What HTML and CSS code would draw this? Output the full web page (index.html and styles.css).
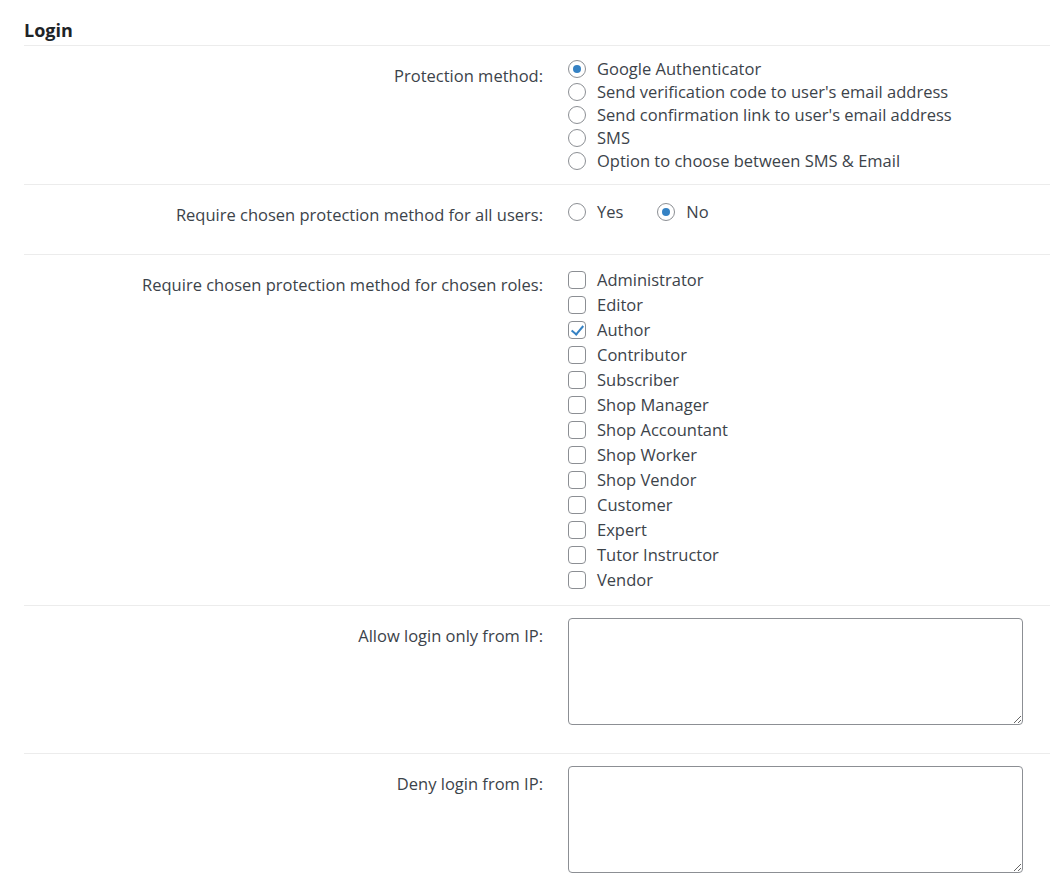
FILE: index.html
```html
<!DOCTYPE html>
<html lang="en">
<head>
    <meta charset="UTF-8">
    <title>Login settings</title>
    <link rel="stylesheet" href="styles.css">
</head>
<body>
    <div class="settings">
        <h2 class="section-title">Login</h2>

        <div class="form-row form-row-method">
            <div class="form-label">Protection method:</div>
            <div class="form-field">
                <label class="choice"><input type="radio" name="method" checked> Google Authenticator</label>
                <label class="choice"><input type="radio" name="method"> Send verification code to user's email address</label>
                <label class="choice"><input type="radio" name="method"> Send confirmation link to user's email address</label>
                <label class="choice"><input type="radio" name="method"> SMS</label>
                <label class="choice"><input type="radio" name="method"> Option to choose between SMS &amp; Email</label>
            </div>
        </div>

        <div class="form-row form-row-inline">
            <div class="form-label">Require chosen protection method for all users:</div>
            <div class="form-field inline">
                <label class="choice"><input type="radio" name="all"> Yes</label>
                <label class="choice"><input type="radio" name="all" checked> No</label>
            </div>
        </div>

        <div class="form-row form-row-roles">
            <div class="form-label">Require chosen protection method for chosen roles:</div>
            <div class="form-field roles">
                <label class="choice"><input type="checkbox"> Administrator</label>
                <label class="choice"><input type="checkbox"> Editor</label>
                <label class="choice"><input type="checkbox" checked> Author</label>
                <label class="choice"><input type="checkbox"> Contributor</label>
                <label class="choice"><input type="checkbox"> Subscriber</label>
                <label class="choice"><input type="checkbox"> Shop Manager</label>
                <label class="choice"><input type="checkbox"> Shop Accountant</label>
                <label class="choice"><input type="checkbox"> Shop Worker</label>
                <label class="choice"><input type="checkbox"> Shop Vendor</label>
                <label class="choice"><input type="checkbox"> Customer</label>
                <label class="choice"><input type="checkbox"> Expert</label>
                <label class="choice"><input type="checkbox"> Tutor Instructor</label>
                <label class="choice"><input type="checkbox"> Vendor</label>
            </div>
        </div>

        <div class="form-row form-row-area">
            <div class="form-label">Allow login only from IP:</div>
            <div class="form-field">
                <textarea class="ip-list"></textarea>
            </div>
        </div>

        <div class="form-row form-row-area">
            <div class="form-label">Deny login from IP:</div>
            <div class="form-field">
                <textarea class="ip-list"></textarea>
            </div>
        </div>
    </div>
</body>
</html>
```

FILE: styles.css
```css
body {
    margin: 0;
    padding: 0;
    background: #fff;
    color: #3c434a;
    font-family: "Open Sans", "Noto Sans", sans-serif;
    font-size: 16.5px;
}

.settings {
    padding: 18px 0 0 24px;
}

.section-title {
    margin: 0;
    padding-bottom: 3px;
    font-size: 18px;
    font-weight: 700;
    color: #1d2327;
    line-height: 24px;
    border-bottom: 1px solid #ececec;
}

.form-row {
    display: grid;
    grid-template-columns: 519px 1fr;
    column-gap: 25px;
    padding: 12px 0 12px;
    border-bottom: 1px solid #ececec;
}

.form-row:last-child {
    border-bottom: none;
}

.form-label {
    text-align: right;
    line-height: 23px;
    padding-top: 6px;
}

.form-field {
    display: flex;
    flex-direction: column;
}

.choice {
    display: flex;
    align-items: center;
    line-height: 23px;
    height: 23px;
}

.form-row-method {
    padding-top: 11px;
}

.form-row-method .form-label {
    padding-top: 7px;
}

.form-field.inline {
    flex-direction: row;
    gap: 34px;
}

.form-row-inline {
    padding: 15px 0 28px;
}

.form-row-inline .form-label {
    padding-top: 3px;
}

.form-row-roles {
    padding: 12px 0 13px;
}

.form-row-roles .choice {
    height: 25px;
    line-height: 25px;
}

.form-row-roles .form-label {
    padding-top: 6px;
}

.form-row-area {
    padding: 12px 0 28px;
}

.form-row-area .form-label {
    padding-top: 6px;
}

/* radios + checkboxes */
input[type="radio"],
input[type="checkbox"] {
    appearance: none;
    -webkit-appearance: none;
    margin: 0 11px 0 0;
    width: 18px;
    height: 18px;
    border: 1px solid #8c8f94;
    background: #fff;
    position: relative;
    flex-shrink: 0;
}

input[type="radio"] {
    border-radius: 50%;
}

input[type="radio"]:checked::before {
    content: "";
    position: absolute;
    top: 4px;
    left: 4px;
    width: 8px;
    height: 8px;
    border-radius: 50%;
    background: #3582c4;
}

input[type="checkbox"] {
    border-radius: 4px;
}

input[type="checkbox"]:checked::before {
    content: "";
    position: absolute;
    left: 5px;
    top: 1px;
    width: 5px;
    height: 10px;
    border: solid #3582c4;
    border-width: 0 2.5px 2.5px 0;
    transform: rotate(40deg);
}

.ip-list {
    width: 455px;
    height: 107px;
    box-sizing: border-box;
    border: 1px solid #8c8f94;
    border-radius: 4px;
    margin: 0;
    font-family: inherit;
    font-size: 14px;
    resize: both;
}
```
